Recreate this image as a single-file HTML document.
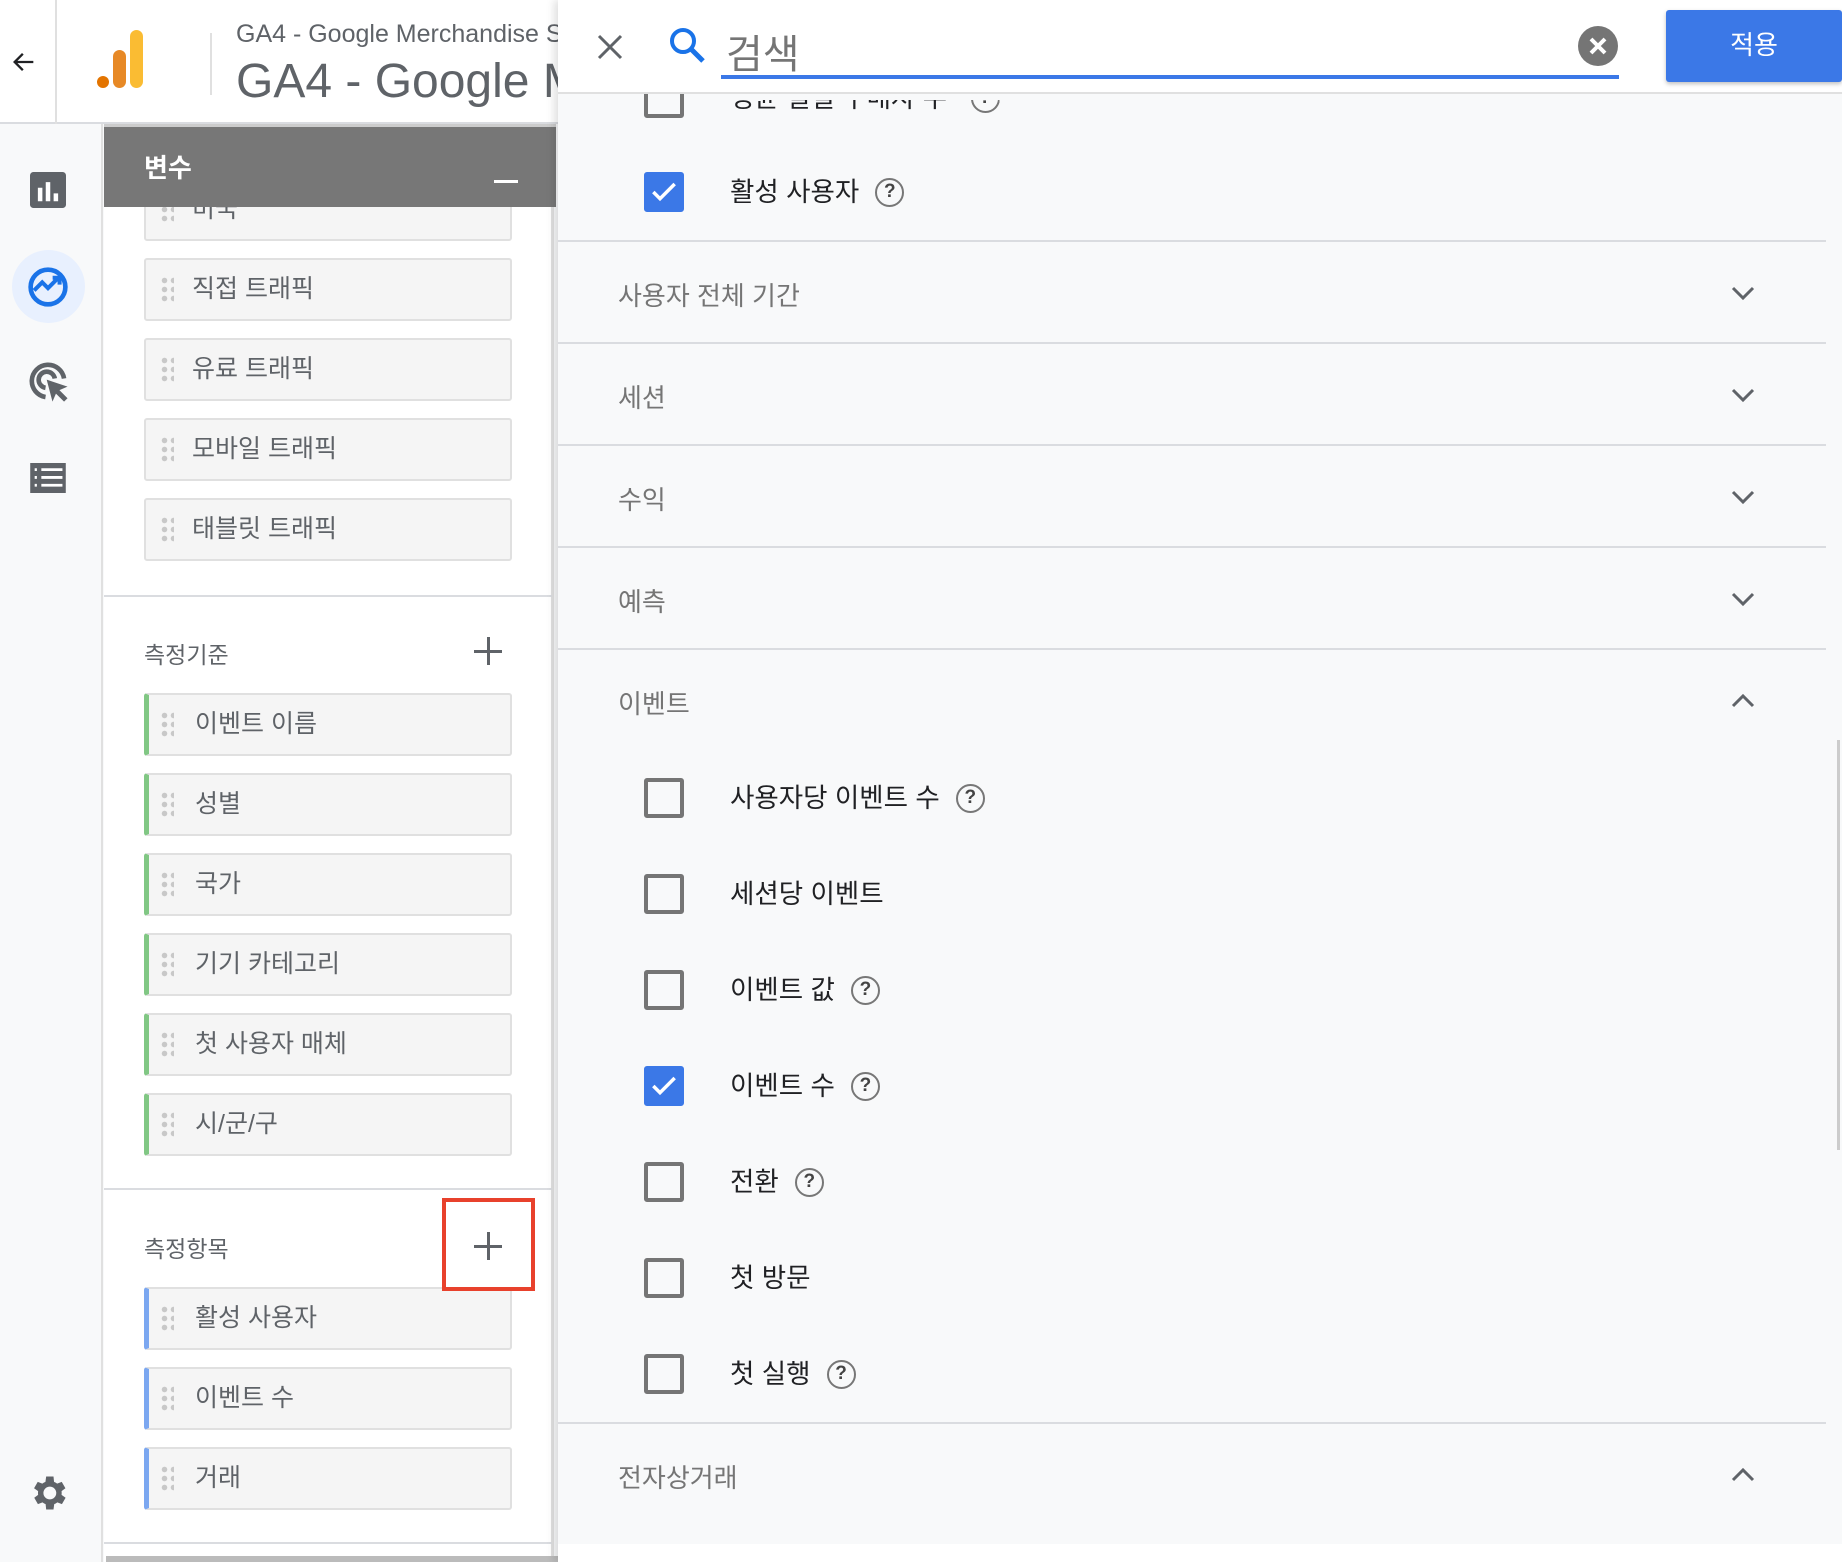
<!DOCTYPE html>
<html><head><meta charset="utf-8"><style>
*{box-sizing:border-box;margin:0;padding:0}
body{width:1842px;height:1562px;overflow:hidden;position:relative;background:#f8f9fa;font-family:"Liberation Sans","Noto Sans CJK KR",sans-serif}
.a{position:absolute}
.item{position:absolute;left:144px;width:368px;height:63px;background:#f5f5f5;border:2px solid #e0e0e0;border-radius:3px;font-size:25px;color:#5f6368;line-height:59px;padding-left:46px}
.item.g{border-left:5px solid #81c784}
.item.b{border-left:5px solid #7ba7f0}
.dots{position:absolute;left:14px;top:16px;width:14px;height:28px;background-image:radial-gradient(circle,#c8c8c8 2.5px,transparent 3px);background-size:9px 9px}
.item.g .dots,.item.b .dots{left:11px}
.div{position:absolute;height:2px;background:#dadce0}
.sec{position:absolute;left:618px;font-size:26px;color:#757575}
.chev{position:absolute;left:1730px;width:26px;height:26px}
.cb{position:absolute;left:644px;width:40px;height:40px;border:4px solid #757575;border-radius:3px}
.cb.on{background:#3b78e7;border-color:#3b78e7}
.lbl{position:absolute;left:730px;font-size:26.5px;color:#202124;line-height:40px;white-space:nowrap}
.q{display:inline-block;width:29px;height:29px;border:2.5px solid #777;border-radius:50%;font-size:19px;font-weight:bold;line-height:24px;text-align:center;color:#444;vertical-align:middle;margin-left:16px;margin-top:-4px}
</style></head><body>
<div class="a" style="left:0;top:0;width:560px;height:124px;background:#fff;border-bottom:2px solid #dadce0"></div>
<div class="a" style="left:55px;top:0;width:2px;height:124px;background:#e0e0e0"></div>
<svg class="a" style="left:10px;top:48px" width="28" height="28" viewBox="0 0 24 24"><path d="M20 12H5M11 5l-7 7 7 7" fill="none" stroke="#202124" stroke-width="2"/></svg>
<svg class="a" style="left:96px;top:30px" width="56" height="60" viewBox="0 0 56 60"><circle cx="7" cy="52" r="6" fill="#e37400"/><rect x="17" y="20" width="13" height="38" rx="6.5" fill="#e37400" opacity=".85"/><rect x="34" y="0" width="13" height="58" rx="6.5" fill="#f9ab00" opacity=".8"/></svg>
<div class="a" style="left:210px;top:33px;width:2px;height:62px;background:#e0e0e0"></div>
<div class="a" style="left:236px;top:20px;font-size:25px;color:#5f6368;white-space:nowrap">GA4 - Google Merchandise Store</div>
<div class="a" style="left:236px;top:54px;font-size:48px;color:#5f6368;white-space:nowrap">GA4 - Google Merchandise</div>
<div class="a" style="left:0;top:124px;width:103px;height:1438px;background:#f8f9fa;border-right:2px solid #e0e0e0"></div>
<svg class="a" style="left:30px;top:172px" width="36" height="36" viewBox="0 0 32 32"><rect width="32" height="32" rx="3" fill="#5f6368"/><rect x="7" y="14" width="4" height="12" fill="#fff"/><rect x="14" y="9" width="4" height="17" fill="#fff"/><rect x="21" y="19" width="4" height="7" fill="#fff"/></svg>
<div class="a" style="left:12px;top:250px;width:73px;height:73px;border-radius:50%;background:#e8f0fe"></div>
<svg class="a" style="left:26px;top:265px" width="44" height="44" viewBox="0 0 38 38"><circle cx="19" cy="19" r="15" fill="none" stroke="#1a73e8" stroke-width="4"/><path d="M7 22l7-7 5 5 9-9M23 11h6v6" fill="none" stroke="#1a73e8" stroke-width="3.5"/></svg>
<svg class="a" style="left:27px;top:360px" width="44" height="44" viewBox="0 0 38 38"><path d="M32 16A14 14 0 1 0 16 32" fill="none" stroke="#5f6368" stroke-width="4"/><path d="M24 16A7 7 0 1 0 16 24" fill="none" stroke="#5f6368" stroke-width="4"/><path d="M17 17l18 6-7 3 7 7-3 3-7-7-3 7z" fill="#5f6368"/></svg>
<svg class="a" style="left:30px;top:463px" width="36" height="30" viewBox="0 0 32 27"><rect width="32" height="27" fill="#5f6368"/><path d="M4 6h2M10 6h19M4 13h2M10 13h19M4 20h2M10 20h19" stroke="#fff" stroke-width="2.5"/></svg>
<svg class="a" style="left:26px;top:1471px" width="44" height="44" viewBox="0 0 24 24"><path fill="#5f6368" d="M19.4 13a7.5 7.5 0 0 0 0-2l2.1-1.6-2-3.5-2.5 1a7.3 7.3 0 0 0-1.7-1L15 3h-4l-.4 2.9a7.3 7.3 0 0 0-1.7 1l-2.5-1-2 3.5L6.6 11a7.5 7.5 0 0 0 0 2l-2.1 1.6 2 3.5 2.5-1a7.3 7.3 0 0 0 1.7 1L11 21h4l.4-2.9a7.3 7.3 0 0 0 1.7-1l2.5 1 2-3.5zM13 15.5A3.5 3.5 0 1 1 13 8.5a3.5 3.5 0 0 1 0 7z"/></svg>
<div class="a" style="left:104px;top:124px;width:450px;height:1438px;background:#fff;border-right:3px solid #e0e0e0"></div>
<div class="item" style="top:178px"><span class="dots"></span>미국</div>
<div class="a" style="left:104px;top:124px;width:452px;height:83px;background:#777;border-top:3px solid #ccc"></div>
<div class="a" style="left:144px;top:148px;font-size:26px;color:#fff;font-weight:bold">변수</div>
<div class="a" style="left:494px;top:180px;width:24px;height:3px;background:#fff"></div>
<div class="item" style="top:258px"><span class="dots"></span>직접 트래픽</div>
<div class="item" style="top:338px"><span class="dots"></span>유료 트래픽</div>
<div class="item" style="top:418px"><span class="dots"></span>모바일 트래픽</div>
<div class="item" style="top:498px"><span class="dots"></span>태블릿 트래픽</div>
<div class="div" style="left:104px;top:595px;width:448px"></div>
<div class="a" style="left:144px;top:636px;font-size:23px;color:#5f6368">측정기준</div>
<div class="a" style="left:474px;top:650px;width:28px;height:3px;background:#5f6368"></div>
<div class="a" style="left:487px;top:637px;width:3px;height:28px;background:#5f6368"></div>
<div class="item g" style="top:693px"><span class="dots"></span>이벤트 이름</div>
<div class="item g" style="top:773px"><span class="dots"></span>성별</div>
<div class="item g" style="top:853px"><span class="dots"></span>국가</div>
<div class="item g" style="top:933px"><span class="dots"></span>기기 카테고리</div>
<div class="item g" style="top:1013px"><span class="dots"></span>첫 사용자 매체</div>
<div class="item g" style="top:1093px"><span class="dots"></span>시/군/구</div>
<div class="div" style="left:104px;top:1188px;width:448px"></div>
<div class="a" style="left:144px;top:1230px;font-size:23px;color:#5f6368">측정항목</div>
<div class="a" style="left:474px;top:1245px;width:28px;height:3px;background:#5f6368"></div>
<div class="a" style="left:487px;top:1232px;width:3px;height:28px;background:#5f6368"></div>
<div class="item b" style="top:1287px"><span class="dots"></span>활성 사용자</div>
<div class="item b" style="top:1367px"><span class="dots"></span>이벤트 수</div>
<div class="item b" style="top:1447px"><span class="dots"></span>거래</div>
<div class="a" style="left:442px;top:1198px;width:93px;height:93px;border:4px solid #e8412c"></div>
<div class="div" style="left:104px;top:1542px;width:448px"></div>
<div class="a" style="left:106px;top:1556px;width:452px;height:6px;background:#bbb"></div>
<div class="a" style="left:558px;top:0;width:1284px;height:1562px;background:#f8f9fa;box-shadow:-4px 0 8px rgba(0,0,0,.12)"></div>
<div class="cb" style="top:78px"></div>
<div class="lbl" style="top:78px;clip-path:inset(22px 0 0 0)">평균 일일 구매자 수 <span class="q">?</span></div>
<div class="a" style="left:558px;top:0;width:1284px;height:94px;background:#fff;border-bottom:2px solid #e0e0e0"></div>
<svg class="a" style="left:596px;top:33px" width="28" height="28" viewBox="0 0 28 28"><path d="M3 3l22 22M25 3L3 25" stroke="#5f6368" stroke-width="3"/></svg>
<svg class="a" style="left:668px;top:26px" width="40" height="40" viewBox="0 0 40 40"><circle cx="15" cy="15" r="11" fill="none" stroke="#1a73e8" stroke-width="4"/><path d="M23 23l12 12" stroke="#1a73e8" stroke-width="5"/></svg>
<div class="a" style="left:726px;top:22px;font-size:40px;color:#757575">검색</div>
<div class="a" style="left:721px;top:75px;width:898px;height:4px;background:#3b78e7"></div>
<svg class="a" style="left:1578px;top:26px" width="40" height="40" viewBox="0 0 40 40"><circle cx="20" cy="20" r="20" fill="#757575"/><path d="M13 13l14 14M27 13L13 27" stroke="#fff" stroke-width="4"/></svg>
<div class="a" style="left:1666px;top:10px;width:176px;height:72px;background:#3b78e7;border-radius:3px;box-shadow:0 2px 4px rgba(0,0,0,.25);color:#fff;font-size:26px;text-align:center;line-height:70px">적용</div>
<div class="cb on" style="top:172px"></div>
<svg class="a" style="left:648px;top:176px" width="32" height="32" viewBox="0 0 24 24"><path d="M4 12l5 5L20 6" fill="none" stroke="#fff" stroke-width="2.6"/></svg>
<div class="lbl" style="top:172px">활성 사용자<span class="q">?</span></div>
<div class="div" style="left:558px;top:240px;width:1268px"></div>
<div class="sec" style="top:276px">사용자 전체 기간</div>
<div class="div" style="left:558px;top:342px;width:1268px"></div>
<div class="sec" style="top:378px">세션</div>
<div class="div" style="left:558px;top:444px;width:1268px"></div>
<div class="sec" style="top:480px">수익</div>
<div class="div" style="left:558px;top:546px;width:1268px"></div>
<div class="sec" style="top:582px">예측</div>
<div class="div" style="left:558px;top:648px;width:1268px"></div>
<div class="sec" style="top:684px">이벤트</div>
<svg class="chev" style="top:280px" viewBox="0 0 26 26"><path d="M3 8l10 10 10-10" fill="none" stroke="#5f6368" stroke-width="3"/></svg>
<svg class="chev" style="top:382px" viewBox="0 0 26 26"><path d="M3 8l10 10 10-10" fill="none" stroke="#5f6368" stroke-width="3"/></svg>
<svg class="chev" style="top:484px" viewBox="0 0 26 26"><path d="M3 8l10 10 10-10" fill="none" stroke="#5f6368" stroke-width="3"/></svg>
<svg class="chev" style="top:586px" viewBox="0 0 26 26"><path d="M3 8l10 10 10-10" fill="none" stroke="#5f6368" stroke-width="3"/></svg>
<svg class="chev" style="top:688px" viewBox="0 0 26 26"><path d="M3 18l10-10 10 10" fill="none" stroke="#5f6368" stroke-width="3"/></svg>
<div class="cb" style="top:778px"></div><div class="lbl" style="top:778px">사용자당 이벤트 수<span class="q">?</span></div>
<div class="cb" style="top:874px"></div><div class="lbl" style="top:874px">세션당 이벤트</div>
<div class="cb" style="top:970px"></div><div class="lbl" style="top:970px">이벤트 값<span class="q">?</span></div>
<div class="cb on" style="top:1066px"></div>
<svg class="a" style="left:648px;top:1070px" width="32" height="32" viewBox="0 0 24 24"><path d="M4 12l5 5L20 6" fill="none" stroke="#fff" stroke-width="2.6"/></svg>
<div class="lbl" style="top:1066px">이벤트 수<span class="q">?</span></div>
<div class="cb" style="top:1162px"></div><div class="lbl" style="top:1162px">전환<span class="q">?</span></div>
<div class="cb" style="top:1258px"></div><div class="lbl" style="top:1258px">첫 방문</div>
<div class="cb" style="top:1354px"></div><div class="lbl" style="top:1354px">첫 실행<span class="q">?</span></div>
<div class="div" style="left:558px;top:1422px;width:1268px"></div>
<div class="sec" style="top:1458px">전자상거래</div>
<svg class="chev" style="top:1462px" viewBox="0 0 26 26"><path d="M3 18l10-10 10 10" fill="none" stroke="#5f6368" stroke-width="3"/></svg>
<div class="a" style="left:558px;top:1544px;width:1284px;height:18px;background:#fff"></div>
<div class="a" style="left:1837px;top:740px;width:3px;height:410px;background:#ccc"></div>
</body></html>
